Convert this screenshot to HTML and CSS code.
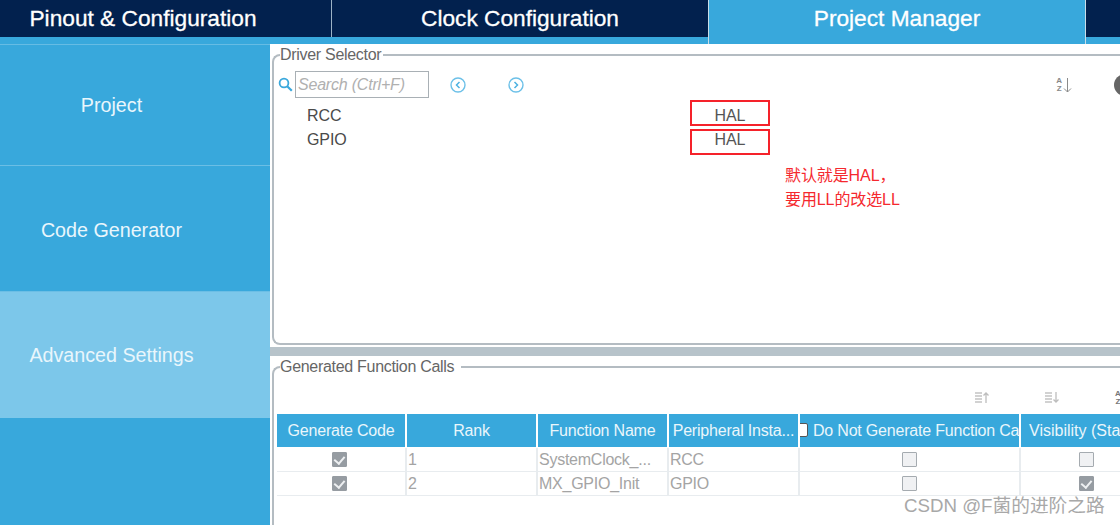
FILE: index.html
```html
<!DOCTYPE html>
<html lang="en">
<head>
<meta charset="utf-8">
<title>Project Manager</title>
<link rel="stylesheet" href="styles.css">
</head>
<body>
<div class="page">
  <nav class="tabs">
    <div class="tab tab-1">Pinout &amp; Configuration</div>
    <div class="tab tab-2">Clock Configuration</div>
    <div class="tab tab-3 active">Project Manager</div>
    <div class="tab tab-4"></div>
  </nav>
  <div class="main">
    <aside class="side">
      <div class="side-item s1">Project</div>
      <div class="side-item s2">Code Generator</div>
      <div class="side-item s3 selected">Advanced Settings</div>
    </aside>
    <section class="content">
      <fieldset class="group driver">
        <legend>Driver Selector</legend>
        <div class="toolbar">
          <svg class="ic-search" width="15" height="15" viewBox="0 0 15 15"><circle cx="6" cy="6" r="4.4" fill="none" stroke="#3aa8dc" stroke-width="1.8"/><path d="M9.2 9.2l4.6 4.6" stroke="#3aa8dc" stroke-width="2.2"/></svg>
          <div class="search">Search (Ctrl+F)</div>
          <svg class="ic-nav prev" width="16" height="16" viewBox="0 0 16 16"><circle cx="8" cy="8" r="7" fill="none" stroke="#6cc0e8" stroke-width="1.4"/><path d="M9.5 5L6.5 8l3 3" fill="none" stroke="#4db2e2" stroke-width="1.5"/></svg>
          <svg class="ic-nav next" width="16" height="16" viewBox="0 0 16 16"><circle cx="8" cy="8" r="7" fill="none" stroke="#6cc0e8" stroke-width="1.4"/><path d="M6.5 5l3 3-3 3" fill="none" stroke="#4db2e2" stroke-width="1.5"/></svg>
          <div class="tool-right">
            <span class="az"><span class="az-letters">A<br>Z</span><svg width="9" height="16" viewBox="0 0 9 16"><path d="M4.5 1v14M1 11.5l3.5 3.5 3.5-3.5" fill="none" stroke="#8b8b8b" stroke-width="1"/></svg></span>
            <span class="round"></span>
          </div>
        </div>
        <div class="drv-row"><span class="drv-name">RCC</span><span class="drv-val">HAL</span></div>
        <div class="drv-row"><span class="drv-name">GPIO</span><span class="drv-val">HAL</span></div>
      </fieldset>
      <div class="splitter"></div>
      <fieldset class="group calls">
        <legend>Generated Function Calls</legend>
        <div class="sortbar">
          <svg class="sort s-up" width="16" height="13" viewBox="0 0 16 13"><path d="M1 2h7M1 5h7M1 8h7M1 11h7" stroke="#c4c4c4" stroke-width="1.4"/><path d="M12 12V2M9.5 4.5L12 2l2.5 2.5" fill="none" stroke="#bdbdbd" stroke-width="1.3"/></svg>
          <svg class="sort s-down" width="16" height="13" viewBox="0 0 16 13"><path d="M1 2h7M1 5h7M1 8h7M1 11h7" stroke="#c4c4c4" stroke-width="1.4"/><path d="M12 1v10M9.5 8.5L12 11l2.5-2.5" fill="none" stroke="#bdbdbd" stroke-width="1.3"/></svg>
          <span class="az-letters cut">A<br>Z</span>
        </div>
        <div class="table">
          <div class="th">Generate Code</div>
          <div class="th">Rank</div>
          <div class="th">Function Name</div>
          <div class="th">Peripheral Insta...</div>
          <div class="th th-check"><span class="hbox"></span><span class="th-clip">Do Not Generate Function Ca</span></div>
          <div class="th th-left">Visibility (Static)</div>

          <div class="td c first"><span class="cb on"></span></div>
          <div class="td">1</div>
          <div class="td">SystemClock_...</div>
          <div class="td">RCC</div>
          <div class="td c"><span class="cb"></span></div>
          <div class="td c"><span class="cb"></span></div>

          <div class="td c first"><span class="cb on"></span></div>
          <div class="td">2</div>
          <div class="td">MX_GPIO_Init</div>
          <div class="td">GPIO</div>
          <div class="td c"><span class="cb"></span></div>
          <div class="td c"><span class="cb on"></span></div>
        </div>
      </fieldset>
    </section>
  </div>
  <div class="mark box-1"></div>
  <div class="mark box-2"></div>
  <div class="note">默认就是HAL，<br>要用LL的改选LL</div>
  <div class="watermark">CSDN @F菌的进阶之路</div>
</div>
</body>
</html>
```
FILE: styles.css
```css
* { box-sizing: border-box; }
html, body { margin: 0; padding: 0; }
body {
  width: 1120px;
  height: 525px;
  overflow: hidden;
  background: #fff;
  font-family: "Liberation Sans", Arial, "Noto Sans CJK SC", sans-serif;
  color: #555;
}
.page { position: relative; width: 1120px; height: 525px; overflow: hidden; }

.tabs {
  display: grid;
  grid-template-columns: 332px 377px 377px 34px;
  height: 43.5px;
  padding-bottom: 7px;
  background: #38a8dc;
}
.tab {
  display: flex;
  align-items: center;
  justify-content: center;
  background: #02214e;
  color: #fff;
  font-size: 22.7px;
  -webkit-text-stroke: 0.3px #fff;
  border-right: 1px solid #9db3c6;
}
.tab-1 { padding-right: 45px; }
.tab.active {
  background: #38a8dc;
  margin-bottom: -7px;
  padding-bottom: 7px;
  border-left: 1px solid #c9dde8;
  border-right: 1px solid #c9dde8;
  margin-left: -1px;
}
.tab-4 { border-right: 0; }

.main { display: flex; height: 481.5px; }
.side {
  width: 270px;
  flex: none;
  background: #38a8dc;
  border-top: 1px solid #66bce4;
}
.side-item {
  display: flex;
  align-items: center;
  justify-content: center;
  color: #e9f6fc;
  font-size: 19.7px;
  padding-right: 47px;
  border-bottom: 1px solid #6bbee5;
}
.s1 { height: 121px; padding-top: 2px; }
.s2 { height: 126px; padding-top: 5px; }
.s3 { height: 126px; padding-top: 1px; border-bottom: 0; }
.selected { background: #7cc7ea; }

.content { flex: 1; min-width: 0; display: flex; flex-direction: column; padding-left: 2px; }
.group {
  margin: 0;
  padding: 0;
  min-width: 0;
  border: 2px solid #b4bcc2;
  border-right: 0;
  border-radius: 8px 0 0 8px;
}
.group legend {
  margin-left: 6px;
  padding: 0 2px 0 0;
  font-size: 16px;
  letter-spacing: -0.3px;
  line-height: 18px;
  color: #666;
}
.driver { height: 299.5px; margin-top: 2px; flex: none; }
.splitter { height: 9px; margin-top: 2px; flex: none; background: #b7c3ca; margin-left: -2px; }
.calls { flex: 1; margin-top: 2px; border-bottom: 0; border-radius: 8px 0 0 0; }
.calls legend { padding-right: 7px; }

.toolbar { display: flex; align-items: center; height: 28px; margin: 7px 0 5px; position: relative; }
.ic-search { margin-left: 4px; flex: none; }
.search {
  width: 134px;
  height: 27px;
  margin-left: 2px;
  border: 1.5px solid #a9b0b5;
  font-size: 16px;
  letter-spacing: -0.2px;
  font-style: italic;
  color: #b0b0b0;
  line-height: 26px;
  padding-left: 2px;
  white-space: nowrap;
  flex: none;
}
.ic-nav { flex: none; }
.prev { margin-left: 21px; }
.next { margin-left: 42px; }
.tool-right { margin-left: auto; display: flex; align-items: center; }
.az { display: flex; align-items: center; gap: 1px; margin-right: 42px; }
.az-letters { font-size: 8px; line-height: 8px; font-weight: bold; color: #888; text-align: center; }
.round { width: 22px; height: 22px; margin-right: -16px; border-radius: 50%; background: #666; }

.drv-row { display: flex; align-items: center; height: 24px; font-size: 16px; letter-spacing: -0.1px; color: #4a4a4a; }
.drv-name { margin-left: 33px; width: 383px; }
.drv-val { width: 80px; text-align: center; color: #555; }

.sortbar { position: relative; height: 36px; margin-top: 2px; }
.sort { position: absolute; top: 12.5px; }
.s-up { left: 700px; }
.s-down { left: 770px; }
.cut { position: absolute; top: 12px; left: 841px; color: #777; }

.table {
  display: grid;
  margin-left: 3px;
  grid-template-columns: 128px 129px 129px 129px 219px 130px;
  column-gap: 2px;
  grid-template-rows: 34px 24px 24px;
}
.th {
  display: flex;
  align-items: center;
  justify-content: center;
  background: #38a8dc;
  color: #eaf6fb;
  font-size: 16px;
  letter-spacing: -0.2px;
  white-space: nowrap;
  overflow: hidden;
  margin-bottom: 1px;
}
.th-check { justify-content: flex-start; position: relative; overflow: hidden; }
.th-clip { margin-left: 13px; }
.hbox {
  position: absolute;
  left: -5px;
  top: 9px;
  width: 13px;
  height: 14px;
  background: #fff;
  border: 1.5px solid #555;
  border-radius: 2px;
}
.th-left { justify-content: flex-start; padding-left: 8px; letter-spacing: 0; }
.td {
  display: flex;
  align-items: center;
  font-size: 16px;
  letter-spacing: -0.25px;
  color: #a4a4a4;
  padding-left: 1px;
  border-bottom: 1.5px solid #e8ecef;
  box-shadow: 2px 0 0 #e8ecef;
  white-space: nowrap;
}
.td.c { justify-content: center; padding-left: 0; }
.td.first .cb { margin-right: 3px; }
.cb {
  position: relative;
  display: block;
  width: 15px;
  height: 15px;
  background: #f0f1f3;
  border: 1.5px solid #a5abb0;
  border-radius: 1px;
}
.cb.on { background: #969ca2; border-color: #969ca2; }
.cb.on::after {
  content: "";
  position: absolute;
  left: 3px;
  top: 1px;
  width: 5px;
  height: 8px;
  border: solid #eef0f2;
  border-width: 0 2px 2px 0;
  transform: rotate(40deg);
}

.mark { position: absolute; left: 690px; width: 80px; border: 2.5px solid #f5222a; }
.box-1 { top: 100px; height: 26px; }
.box-2 { top: 129px; height: 25.5px; }
.note {
  position: absolute;
  left: 785px;
  top: 164px;
  font-size: 16px;
  letter-spacing: -0.1px;
  line-height: 23.5px;
  color: #f5282e;
  font-family: "Liberation Sans", "Noto Sans CJK SC", sans-serif;
}
.watermark {
  position: absolute;
  left: 904px;
  top: 495px;
  font-size: 18.7px;
  line-height: 22px;
  color: #a8a8a8;
  white-space: nowrap;
  font-family: "Liberation Sans", "Noto Sans CJK SC", sans-serif;
}
```
